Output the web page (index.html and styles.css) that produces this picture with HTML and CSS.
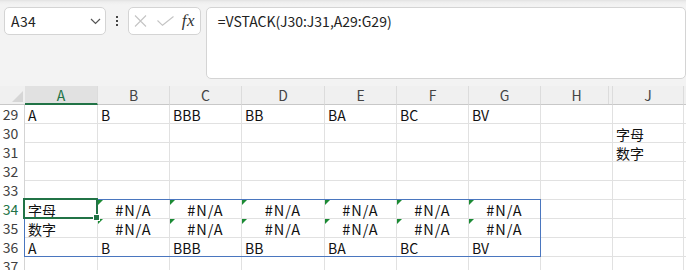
FILE: index.html
```html
<!DOCTYPE html>
<html>
<head>
<meta charset="utf-8">
<link rel="stylesheet" href="styles.css">
</head>
<body>
<div class="app">
  <div class="toolbar">
    <div class="namebox">
      <span class="ref">A34</span>
      <svg class="chev" width="11" height="7" viewBox="0 0 11 7"><path d="M1 1 L5.5 5.5 L10 1" fill="none" stroke="#555" stroke-width="1.2"/></svg>
    </div>
    <div class="kebab"><i></i><i></i><i></i></div>
    <div class="fxbox">
      <svg class="ico-x" width="13" height="12" viewBox="0 0 13 12"><path d="M1 0.5 L12 11.5 M12 0.5 L1 11.5" stroke="#c4c4c4" stroke-width="1.1" fill="none"/></svg>
      <svg class="ico-ok" width="17" height="10" viewBox="0 0 17 10"><path d="M0.5 4.5 L5.5 9.3 L16.5 0.5" stroke="#c4c4c4" stroke-width="1.1" fill="none"/></svg>
      <span class="fx">fx</span>
    </div>
    <div class="formula">=VSTACK(J30:J31,A29:G29)</div>
  </div>

  <div class="sheet">
    <div class="grid">
      <div class="corner"><span class="tri"></span></div>
      <div class="ch sel">A</div><div class="ch">B</div><div class="ch">C</div><div class="ch">D</div><div class="ch">E</div><div class="ch">F</div><div class="ch">G</div><div class="ch hid">H</div><div class="ch">J</div><div class="ch"></div>

      <div class="rh">29</div><div class="c">A</div><div class="c">B</div><div class="c">BBB</div><div class="c">BB</div><div class="c">BA</div><div class="c">BC</div><div class="c">BV</div><div class="c"></div><div class="c"></div><div class="c"></div>

      <div class="rh">30</div><div class="c"></div><div class="c"></div><div class="c"></div><div class="c"></div><div class="c"></div><div class="c"></div><div class="c"></div><div class="c"></div><div class="c">字母</div><div class="c"></div>

      <div class="rh">31</div><div class="c"></div><div class="c"></div><div class="c"></div><div class="c"></div><div class="c"></div><div class="c"></div><div class="c"></div><div class="c"></div><div class="c">数字</div><div class="c"></div>

      <div class="rh">32</div><div class="c"></div><div class="c"></div><div class="c"></div><div class="c"></div><div class="c"></div><div class="c"></div><div class="c"></div><div class="c"></div><div class="c"></div><div class="c"></div>

      <div class="rh">33</div><div class="c"></div><div class="c"></div><div class="c"></div><div class="c"></div><div class="c"></div><div class="c"></div><div class="c"></div><div class="c"></div><div class="c"></div><div class="c"></div>

      <div class="rh sel">34</div><div class="c">字母</div><div class="c err">#N/A</div><div class="c err">#N/A</div><div class="c err">#N/A</div><div class="c err">#N/A</div><div class="c err">#N/A</div><div class="c err">#N/A</div><div class="c"></div><div class="c"></div><div class="c"></div>

      <div class="rh">35</div><div class="c">数字</div><div class="c err">#N/A</div><div class="c err">#N/A</div><div class="c err">#N/A</div><div class="c err">#N/A</div><div class="c err">#N/A</div><div class="c err">#N/A</div><div class="c"></div><div class="c"></div><div class="c"></div>

      <div class="rh">36</div><div class="c">A</div><div class="c">B</div><div class="c">BBB</div><div class="c">BB</div><div class="c">BA</div><div class="c">BC</div><div class="c">BV</div><div class="c"></div><div class="c"></div><div class="c"></div>

      <div class="rh">37</div><div class="c"></div><div class="c"></div><div class="c"></div><div class="c"></div><div class="c"></div><div class="c"></div><div class="c"></div><div class="c"></div><div class="c"></div><div class="c"></div>
    </div>
    <div class="spill"></div>
    <div class="selbox"></div>
    <div class="handle"></div>
  </div>
</div>
</body>
</html>
```

FILE: styles.css
```css
* { box-sizing: border-box; }
html, body { margin: 0; padding: 0; }
body {
  width: 686px;
  height: 270px;
  overflow: hidden;
  background: #f3f3f3;
  font-family: "Noto Sans CJK SC", "Noto Sans", sans-serif;
  color: #111;
}
.app { display: flex; flex-direction: column; }

.toolbar {
  height: 86px;
  display: flex;
  align-items: flex-start;
  padding: 7px 0 0 4px;
  background: linear-gradient(#e2e2e2 0, #eeeeee 2px, #f3f3f3 5px);
}
.namebox {
  width: 102px;
  height: 28px;
  background: #fff;
  border: 1px solid #d4d4d4;
  border-radius: 5px;
  display: flex;
  align-items: center;
  justify-content: space-between;
  padding: 0 4px 0 6px;
  font-size: 14px;
  color: #222;
}
.namebox .ref { line-height: 26px; letter-spacing: 0.4px; }
.chev { display: block; }
.kebab {
  width: 22px;
  height: 28px;
  display: flex;
  flex-direction: column;
  align-items: center;
  justify-content: center;
  gap: 2px;
}
.kebab i {
  display: block;
  width: 2px;
  height: 2px;
  background: #444;
}
.fxbox {
  width: 73px;
  height: 28px;
  background: #fff;
  border: 1px solid #d4d4d4;
  border-radius: 5px;
  display: flex;
  align-items: center;
  padding: 0 0 0 5px;
}
.ico-x { display: block; margin-left: 0; }
.ico-ok { display: block; margin-left: 10px; }
.fx {
  font-family: "Liberation Serif", "DejaVu Serif", serif;
  font-style: italic;
  font-size: 17px;
  color: #333;
  margin-left: 8px;
  letter-spacing: 0.5px;
}
.formula {
  margin-left: 5px;
  width: 481px;
  height: 72px;
  background: #fff;
  border: 1px solid #d4d4d4;
  border-radius: 5px;
  padding: 3px 0 0 11px;
  font-size: 14px;
  line-height: 20px;
  color: #222;
}

.sheet {
  position: relative;
  background: #fff;
}
.grid {
  display: grid;
  grid-template-columns: 25px 73px 72px 72px 83px 72px 72px 72px 72px 71px 1fr;
  grid-template-rows: 19px;
  grid-auto-rows: 19px;
}
.corner {
  background: #f0f0f0;
  border-bottom: 1px solid #c8c8c8;
  position: relative;
}
.tri {
  position: absolute;
  right: 2px;
  bottom: 2px;
  width: 0;
  height: 0;
  border-style: solid;
  border-width: 0 0 11px 11px;
  border-color: transparent transparent #d6d6d6 transparent;
}
.ch {
  background: #f0f0f0;
  border-right: 1px solid #dcdcdc;
  border-bottom: 1px solid #c8c8c8;
  text-align: center;
  font-size: 14px;
  line-height: 18px;
  color: #444;
  position: relative;
}
.ch.sel {
  background: #e1e1e1;
  color: #217346;
  border-bottom: 2px solid #217346;
}
.ch.hid::after {
  content: "";
  position: absolute;
  right: 3px;
  top: 0;
  bottom: 0;
  width: 1px;
  background: #dcdcdc;
}
.rh {
  background: #fff;
  border-right: 1px solid #d4d4d4;
  font-size: 14px;
  line-height: 19px;
  text-align: center;
  padding-right: 3px;
  color: #404040;
}
.rh.sel { color: #217346; }
.c {
  border-right: 1px solid #e1e1e1;
  border-bottom: 1px solid #e1e1e1;
  font-size: 14px;
  line-height: 18px;
  padding: 1px 0 0 3px;
  white-space: nowrap;
  overflow: visible;
  position: relative;
}
.c.err { text-align: center; padding-left: 0; letter-spacing: 1px; font-size: 14.5px; }
.c.err::before {
  content: "";
  position: absolute;
  left: 0;
  top: 0;
  width: 0;
  height: 0;
  border-style: solid;
  border-width: 5px 5px 0 0;
  border-color: #1b8a34 transparent transparent transparent;
}
.spill {
  position: absolute;
  left: 24px;
  top: 113px;
  width: 517px;
  height: 58px;
  border: 1px solid #4a76bf;
  pointer-events: none;
}
.selbox {
  position: absolute;
  left: 23px;
  top: 112px;
  width: 75px;
  height: 21px;
  border: 2px solid #217346;
}
.handle {
  position: absolute;
  left: 93px;
  top: 128px;
  width: 7px;
  height: 7px;
  background: #217346;
  border: 1px solid #fff;
}
```
